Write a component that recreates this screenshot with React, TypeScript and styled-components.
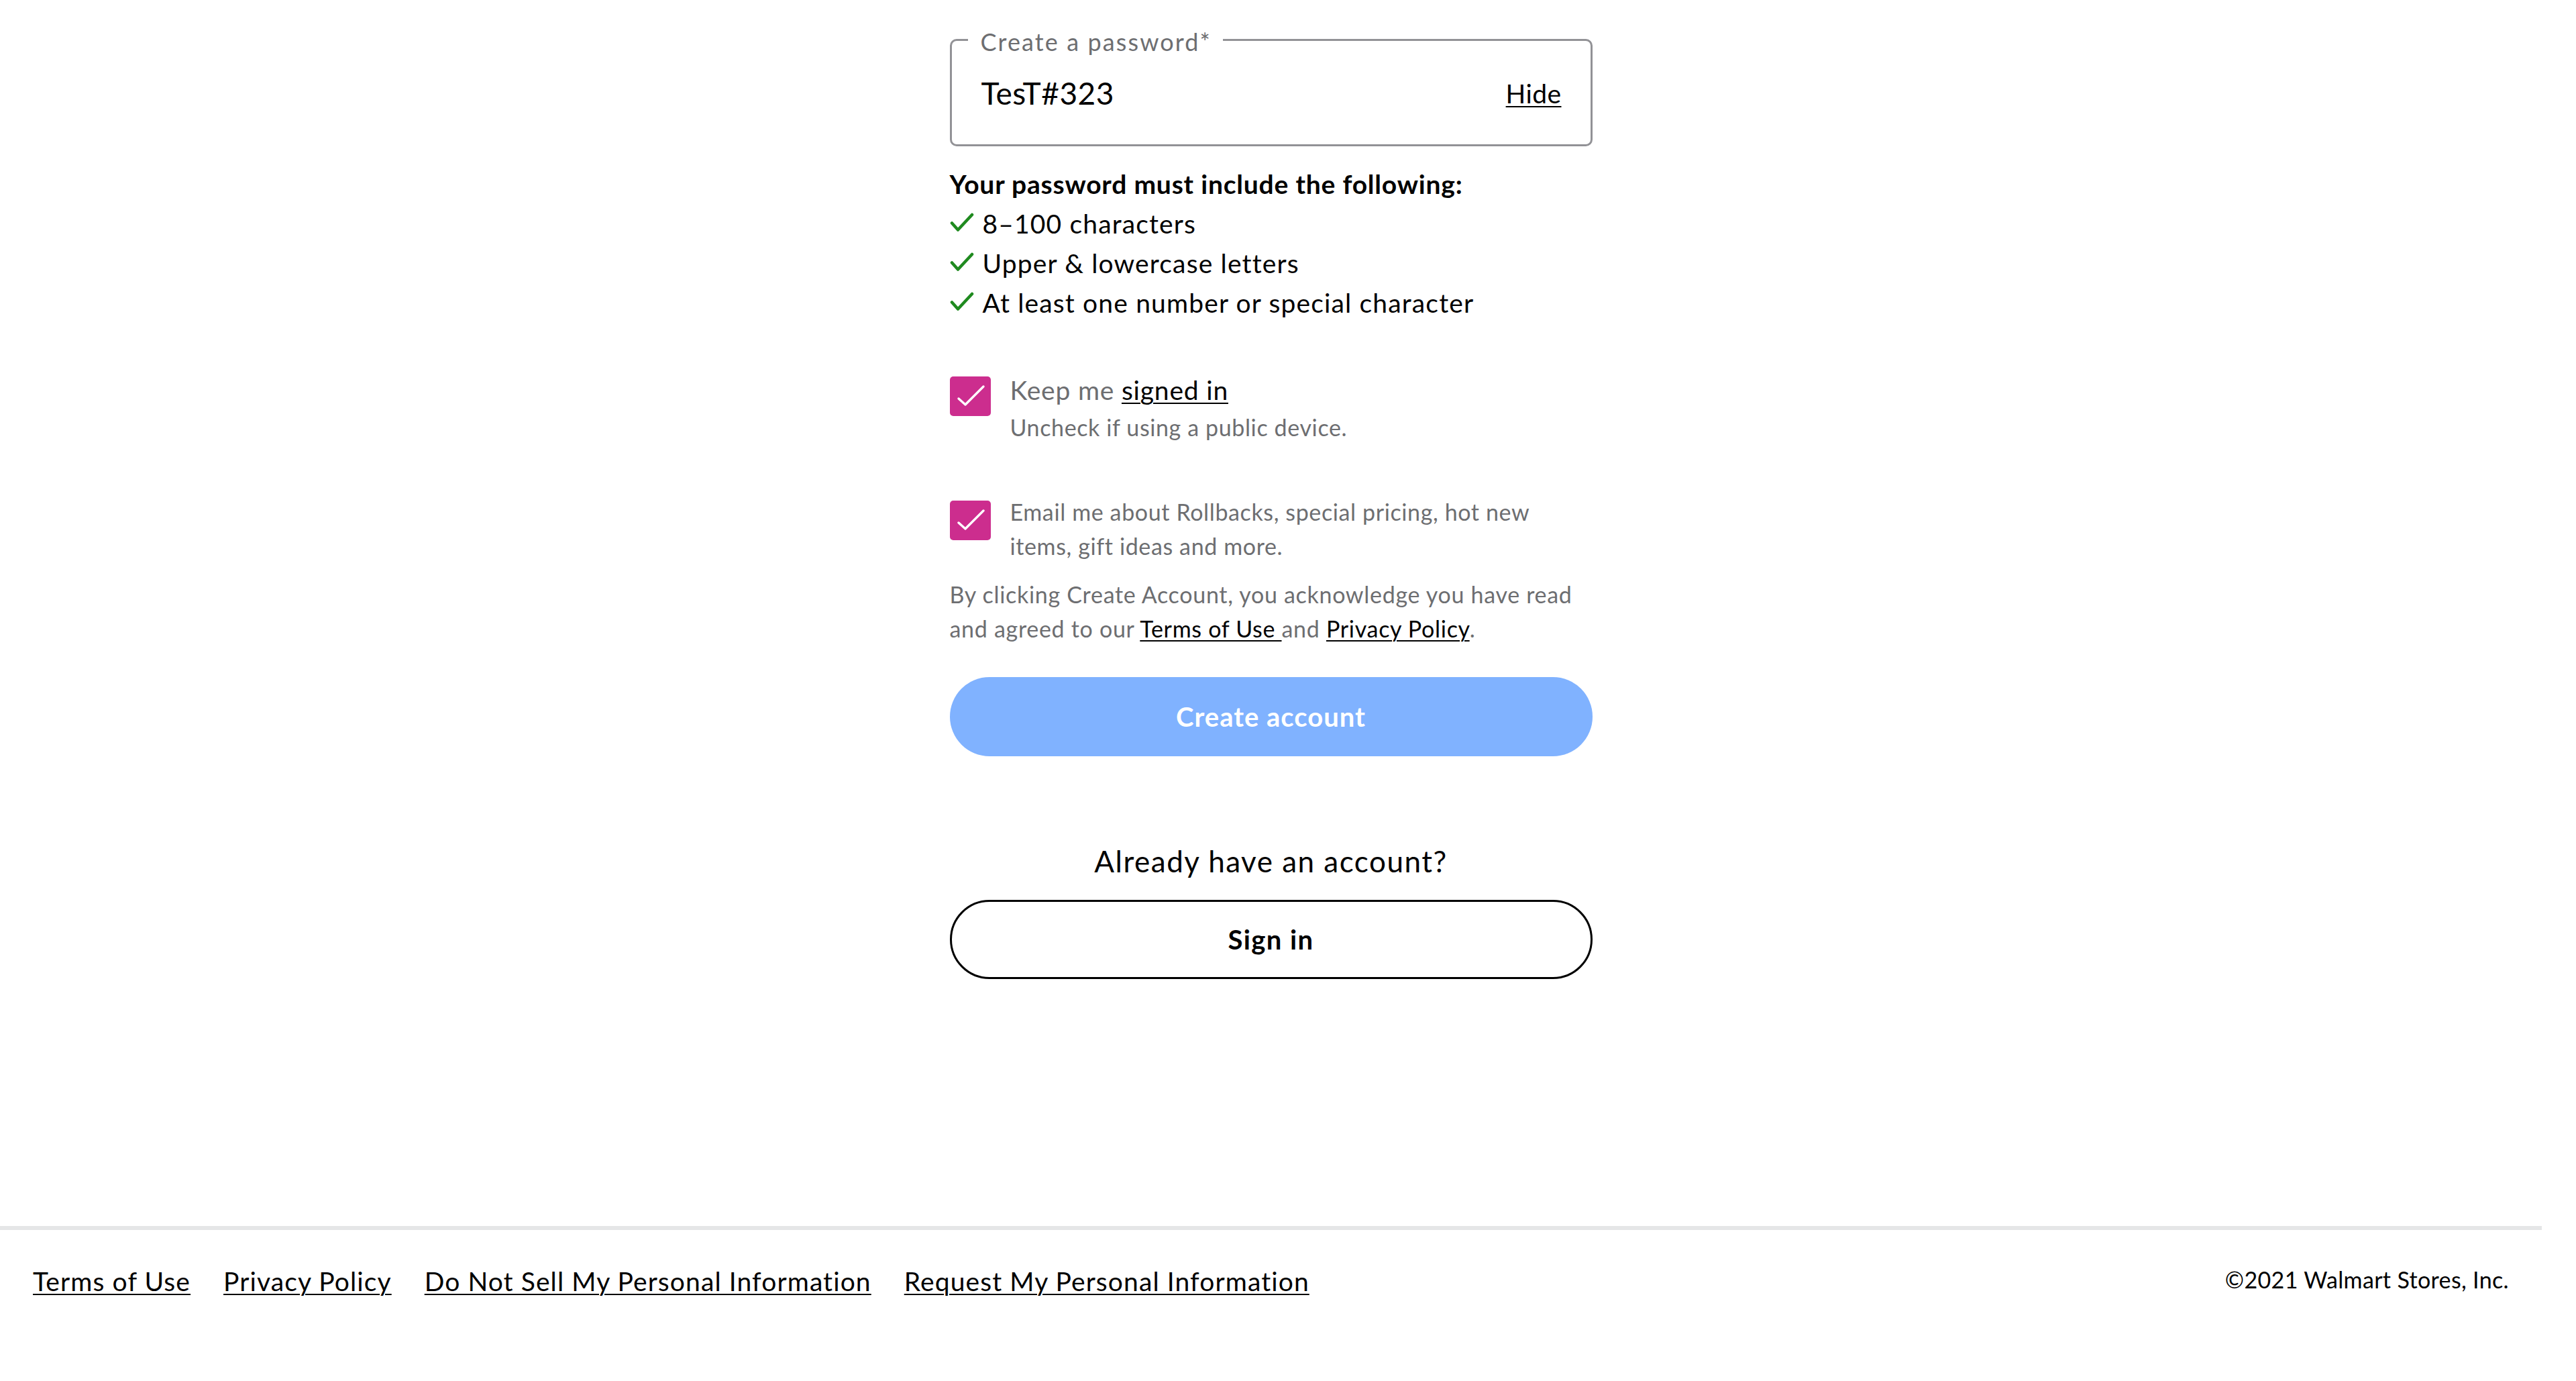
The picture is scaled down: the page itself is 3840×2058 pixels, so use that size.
import React from "react";
import styled, { createGlobalStyle } from "styled-components";

const GlobalStyle = createGlobalStyle`
  html, body {
    margin: 0;
    padding: 0;
    background: #fff;
  }
  body {
    font-family: Lato, "Open Sans", sans-serif;
    letter-spacing: 0.4px;
    color: #000;
  }
  * {
    box-sizing: border-box;
  }
`;

const Page = styled.div`
  min-height: 100vh;
  margin-right: 51px;
  display: flex;
  flex-direction: column;
`;

const Main = styled.main`
  flex: 1;
  display: flex;
  justify-content: center;
  padding-top: 58px;
`;

const Form = styled.form`
  width: 958px;
  display: flex;
  flex-direction: column;
`;

const Field = styled.div`
  position: relative;
  height: 160px;
  border: 3px solid #929296;
  border-radius: 10px;
  display: flex;
  align-items: center;
  justify-content: space-between;
  padding: 2px 43px 0 44px;
`;

const FloatLabel = styled.span`
  position: absolute;
  left: 24px;
  top: -19px;
  padding: 0 17px 0 19px;
  background: #fff;
  font-size: 36px;
  line-height: 40px;
  letter-spacing: 2.1px;
  color: #6d6e71;
`;

const Value = styled.span`
  font-size: 46px;
  line-height: 60px;
  letter-spacing: 0.5px;
  color: #000;
`;

const TextLink = styled.a<{ $size?: number }>`
  color: #000;
  font-size: ${(p) => (p.$size ? `${p.$size}px` : "inherit")};
  text-decoration: underline;
  text-decoration-thickness: 2px;
  text-underline-offset: 4px;
  cursor: pointer;
`;

const RulesTitle = styled.h3`
  margin: 27px 0 0;
  font-size: 39px;
  line-height: 59px;
  font-weight: 700;
  letter-spacing: 0.8px;
`;

const RulesList = styled.ul`
  list-style: none;
  margin: 0;
  padding: 0;
`;

const Rule = styled.li`
  display: flex;
  align-items: center;
  gap: 13px;
  font-size: 39px;
  line-height: 59px;
  letter-spacing: 1.15px;
  svg {
    flex: none;
    margin-top: -4px;
  }
`;

const CheckRow = styled.label<{ $top: number }>`
  display: flex;
  align-items: flex-start;
  gap: 29px;
  margin-top: ${(p) => p.$top}px;
`;

const Box = styled.span`
  flex: none;
  width: 61px;
  height: 59px;
  margin-top: 9px;
  border-radius: 5px;
  background: #cc2d8e;
  display: flex;
  align-items: center;
  justify-content: center;
`;

const CheckText = styled.div`
  display: flex;
  flex-direction: column;
  color: #6d6e71;
`;

const CheckMain = styled.span<{ $big?: boolean }>`
  font-size: ${(p) => (p.$big ? 39 : 34)}px;
  line-height: ${(p) => (p.$big ? 59 : 51)}px;
  letter-spacing: ${(p) => (p.$big ? 0.8 : 0.62)}px;
`;

const Legal = styled.p`
  margin: 21px 0 0;
  font-size: 34px;
  line-height: 51px;
  letter-spacing: 0.7px;
  color: #6d6e71;
`;

const PillButton = styled.button<{ $variant: "primary" | "outline" }>`
  width: 100%;
  height: 118px;
  border-radius: 59px;
  font-family: inherit;
  font-size: 40px;
  font-weight: 700;
  letter-spacing: ${(p) => (p.$variant === "outline" ? "1.4px" : "1px")};
  cursor: pointer;
  border: ${(p) => (p.$variant === "outline" ? "3px solid #000" : "none")};
  background: ${(p) => (p.$variant === "outline" ? "#fff" : "#80b2ff")};
  color: ${(p) => (p.$variant === "outline" ? "#000" : "#fff")};
`;

const CreateButton = styled(PillButton)`
  margin-top: 47px;
`;

const SignInButton = styled(PillButton)`
  margin-top: 25px;
`;

const AlreadyTitle = styled.h2`
  margin: 123px 0 0;
  text-align: center;
  font-size: 44px;
  line-height: 66px;
  font-weight: 400;
  letter-spacing: 1.5px;
`;

const Footer = styled.footer`
  border-top: 6px solid #e5e6e7;
  padding: 47px 49px 119px;
  display: flex;
  align-items: center;
  justify-content: space-between;
`;

const FooterLinks = styled.nav`
  display: flex;
  gap: 49px;
  font-size: 39px;
  line-height: 59px;
  letter-spacing: 1.1px;
`;

const Copyright = styled.span`
  font-size: 34px;
  line-height: 40px;
  letter-spacing: 0.35px;
  margin-bottom: 6px;
`;

const GreenCheck = () => (
  <svg width="36" height="29" viewBox="0 0 36 29">
    <path
      d="M3 15.5 L12 25.5 L33 3"
      fill="none"
      stroke="#1f8a1f"
      strokeWidth="4.5"
      strokeLinecap="round"
      strokeLinejoin="round"
    />
  </svg>
);

const BoxCheck = () => (
  <svg width="61" height="59" viewBox="0 0 61 59">
    <path
      d="M13 33 L23 42 L50 15"
      fill="none"
      stroke="#fff"
      strokeWidth="3.4"
      strokeLinecap="round"
      strokeLinejoin="round"
    />
  </svg>
);

const rules = [
  "8–100 characters",
  "Upper & lowercase letters",
  "At least one number or special character",
];

const footerLinks = [
  "Terms of Use",
  "Privacy Policy",
  "Do Not Sell My Personal Information",
  "Request My Personal Information",
];

export default function App() {
  return (
    <>
      <GlobalStyle />
      <Page>
        <Main>
          <Form onSubmit={(e) => e.preventDefault()}>
            <Field>
              <FloatLabel>Create a password*</FloatLabel>
              <Value>TesT#323</Value>
              <TextLink $size={39}>Hide</TextLink>
            </Field>

            <RulesTitle>Your password must include the following:</RulesTitle>
            <RulesList>
              {rules.map((r) => (
                <Rule key={r}>
                  <GreenCheck />
                  {r}
                </Rule>
              ))}
            </RulesList>

            <CheckRow $top={71}>
              <Box>
                <BoxCheck />
              </Box>
              <CheckText>
                <CheckMain $big>
                  Keep me <TextLink>signed in</TextLink>
                </CheckMain>
                <CheckMain>Uncheck if using a public device.</CheckMain>
              </CheckText>
            </CheckRow>

            <CheckRow $top={75}>
              <Box>
                <BoxCheck />
              </Box>
              <CheckText>
                <CheckMain>
                  Email me about Rollbacks, special pricing, hot new
                  <br />
                  items, gift ideas and more.
                </CheckMain>
              </CheckText>
            </CheckRow>

            <Legal>
              By clicking Create Account, you acknowledge you have read
              <br />
              and agreed to our <TextLink>Terms of Use </TextLink>and{" "}
              <TextLink>Privacy Policy</TextLink>.
            </Legal>

            <CreateButton $variant="primary" type="submit">
              Create account
            </CreateButton>

            <AlreadyTitle>Already have an account?</AlreadyTitle>
            <SignInButton $variant="outline" type="button">
              Sign in
            </SignInButton>
          </Form>
        </Main>

        <Footer>
          <FooterLinks>
            {footerLinks.map((l) => (
              <TextLink key={l}>{l}</TextLink>
            ))}
          </FooterLinks>
          <Copyright>©2021 Walmart Stores, Inc.</Copyright>
        </Footer>
      </Page>
    </>
  );
}
